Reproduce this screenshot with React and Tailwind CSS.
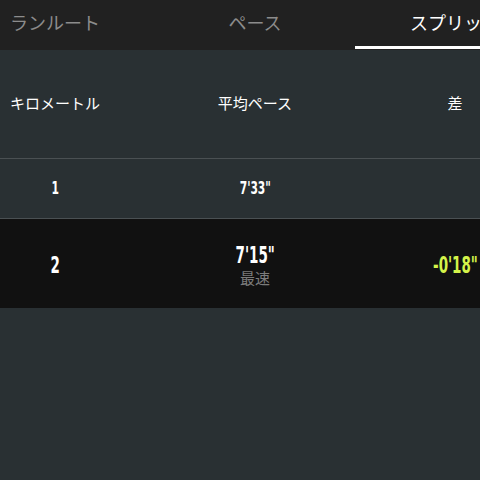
import React from "react";

const jp = { fontFamily: '"Noto Sans CJK JP", "Noto Sans", sans-serif' };
const num = { fontFamily: '"DejaVu Sans Condensed", "DejaVu Sans", sans-serif' };

export default function App() {
  return (
    <div className="w-[480px] h-[480px] overflow-hidden bg-[#293033] flex flex-col" style={jp}>
      <div className="h-[50px] bg-[#212121] flex overflow-hidden shrink-0">
        <div className="flex ml-[-45px] shrink-0">
          <div className="w-[200px] h-[50px] flex items-center justify-center pb-[6px] text-[18px] text-[#8c8c8c]">ランルート</div>
          <div className="w-[200px] h-[50px] flex items-center justify-center pb-[6px] text-[18px] text-[#8c8c8c]">ペース</div>
          <div className="w-[200px] h-[50px] flex items-center justify-center pb-[6px] text-[18px] text-white relative">
            <span>スプリット</span>
            <div className="absolute left-0 right-0 bottom-[1px] h-[3px] bg-white" />
          </div>
        </div>
      </div>
      <div className="flex overflow-hidden shrink-0">
        <div className="flex flex-col ml-[-45px] shrink-0 w-[600px]">
          <div className="h-[109px] grid grid-cols-3 items-center text-[15px] text-white border-b border-[#4a5053] pb-[2px]">
            <div className="text-center">キロメートル</div>
            <div className="text-center">平均ペース</div>
            <div className="text-center">差</div>
          </div>
          <div className="h-[60px] grid grid-cols-3 items-center text-white border-b border-[#4a5053] font-bold" style={num}>
            <div className="text-center text-[17px]"><span className="inline-block scale-x-[0.7]">1</span></div>
            <div className="text-center text-[17px]"><span className="inline-block scale-x-[0.7]">7'33"</span></div>
            <div />
          </div>
          <div className="h-[89px] grid grid-cols-3 items-center bg-[#111111] text-white pt-[4px]">
            <div className="text-center text-[23px] font-bold" style={num}><span className="inline-block scale-x-[0.65]">2</span></div>
            <div className="flex flex-col items-center">
              <span className="text-[23px] font-bold leading-[24px] inline-block scale-x-[0.65]" style={num}>7'15"</span>
              <span className="text-[15px] leading-[22px] text-[#7c7c7c]">最速</span>
            </div>
            <div className="text-center text-[23px] font-bold text-[#d4f34a]" style={num}><span className="inline-block scale-x-[0.65]">-0'18"</span></div>
          </div>
        </div>
      </div>
    </div>
  );
}
